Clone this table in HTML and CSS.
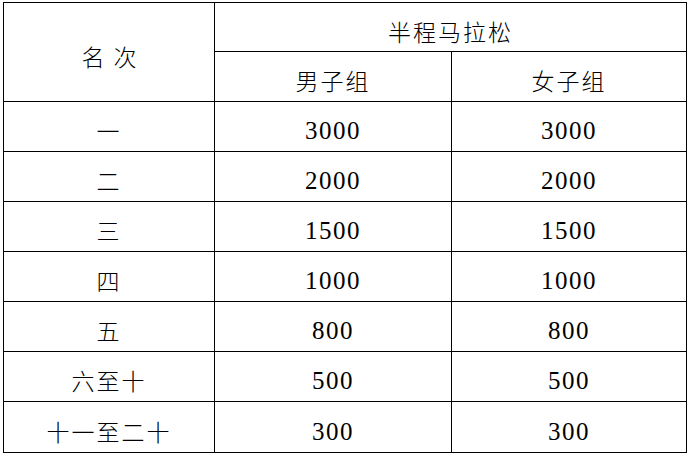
FILE: index.html
```html
<!DOCTYPE html>
<html lang="zh">
<head>
<meta charset="utf-8">
<title>奖金表</title>
<link rel="stylesheet" href="styles.css">
</head>
<body>
<table class="prize">
  <colgroup>
    <col class="c-rank">
    <col class="c-men">
    <col class="c-women">
  </colgroup>
  <tr class="r-top">
    <td class="zh rank-head" rowspan="2">名次</td>
    <td class="zh" colspan="2">半程马拉松</td>
  </tr>
  <tr>
    <td class="zh">男子组</td>
    <td class="zh">女子组</td>
  </tr>
  <tr><td class="zh">一</td><td class="num">3000</td><td class="num">3000</td></tr>
  <tr><td class="zh">二</td><td class="num">2000</td><td class="num">2000</td></tr>
  <tr><td class="zh">三</td><td class="num">1500</td><td class="num">1500</td></tr>
  <tr><td class="zh">四</td><td class="num">1000</td><td class="num">1000</td></tr>
  <tr><td class="zh">五</td><td class="num">800</td><td class="num">800</td></tr>
  <tr><td class="zh">六至十</td><td class="num">500</td><td class="num">500</td></tr>
  <tr class="r-last"><td class="zh">十一至二十</td><td class="num">300</td><td class="num">300</td></tr>
</table>
</body>
</html>
```
FILE: styles.css
```css
html, body {
  margin: 0;
  padding: 0;
  background: #fff;
}
body {
  padding: 2px 0 0 3px;
}
.prize {
  border-collapse: collapse;
  table-layout: fixed;
  width: 683px;
  color: #000;
}
.c-rank { width: 211px; }
.c-men { width: 237px; }
.c-women { width: 235px; }
.prize td {
  border: 1px solid #000;
  height: 50px;
  padding: 8px 0 0 0;
  box-sizing: border-box;
  text-align: center;
  vertical-align: middle;
  line-height: 1;
}
.prize .r-top td { height: 49px; }
.prize .r-last td { height: 51px; }
.zh {
  font-family: "Noto Sans CJK SC", sans-serif;
  font-weight: 300;
  font-size: 23px;
  letter-spacing: 2px;
}
.rank-head {
  letter-spacing: 9px;
  text-indent: 9px;
}
.num {
  font-family: "Liberation Serif", serif;
  font-size: 25px;
  letter-spacing: 1.5px;
}
```
